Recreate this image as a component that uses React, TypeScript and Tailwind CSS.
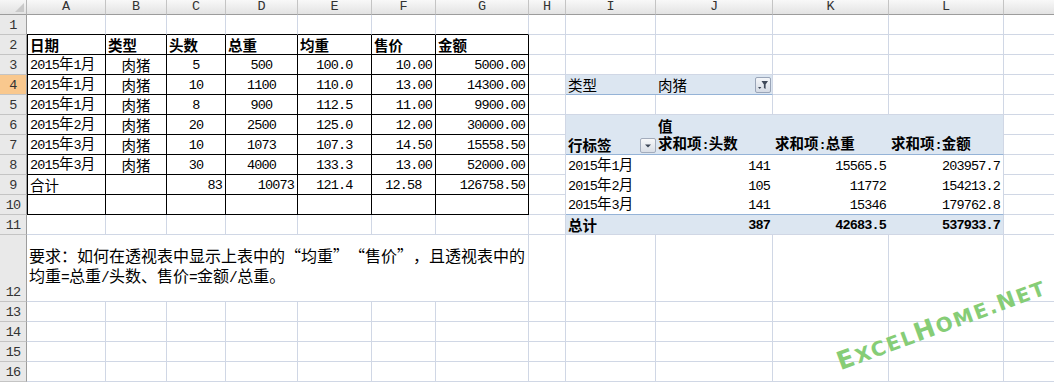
import React from "react";

type Al = "l" | "c" | "r";
type C = { t?: string; a?: Al; b?: boolean; node?: React.ReactNode };

const SPLIT = /[\x00-\x7f]+|[“”]|[^\x00-\x7f“”]+/g;

function T({ s, big }: { s: string; big?: boolean }) {
  const parts = s.match(SPLIT) || [];
  return (
    <span className="whitespace-nowrap">
      {parts.map((p, i) => {
        if (/^[\x00-\x7f]/.test(p))
          return (
            <span
              key={i}
              className={
                big
                  ? "font-['Liberation_Mono',monospace] text-[14.5px] tracking-[-0.7px] whitespace-pre"
                  : "font-['Liberation_Mono',monospace] text-[13.5px] tracking-[-0.85px] whitespace-pre"
              }
            >
              {p}
            </span>
          );
        if (p === "“")
          return (
            <span key={i} className="inline-block w-[16px] text-right font-['Noto_Sans_CJK_SC',sans-serif] text-[16px]">
              {p}
            </span>
          );
        if (p === "”")
          return (
            <span key={i} className="inline-block w-[16px] text-left font-['Noto_Sans_CJK_SC',sans-serif] text-[16px]">
              {p}
            </span>
          );
        return (
          <span
            key={i}
            className={
              big
                ? "font-['Noto_Sans_CJK_SC',sans-serif] text-[16px]"
                : "font-['Noto_Sans_CJK_SC',sans-serif] text-[14.5px]"
            }
          >
            {p}
          </span>
        );
      })}
    </span>
  );
}

function FilterBtn() {
  return (
    <div className="ml-auto mr-[1px] mb-[1px] w-[16px] h-[16px] rounded-[2px] border border-[#9aa5b8] bg-linear-to-b from-[#f4f6f9] to-[#d5dbe5] flex items-center justify-center">
      <svg width="12" height="12" viewBox="0 0 12 12">
        <path d="M4.5 2 L11 2 L8.6 5.4 L8.6 10 L6.9 9 L6.9 5.4 Z" fill="#404a5a" />
        <path d="M1 8 L4.4 8 L2.7 10 Z" fill="#404a5a" />
      </svg>
    </div>
  );
}

function DropBtn() {
  return (
    <div className="ml-auto mb-[1px] w-[16px] h-[15px] rounded-[2px] border border-[#a3acbc] bg-linear-to-b from-[#f7f8fa] to-[#d9dee6] flex items-center justify-center">
      <svg width="8" height="6" viewBox="0 0 8 6">
        <path d="M1 1.5 L7 1.5 L4 4.5 Z" fill="#3c4656" />
      </svg>
    </div>
  );
}

const L = (t: string, b = false): C => ({ t, a: "l", b });
const Ce = (t: string, b = false): C => ({ t, a: "c", b });
const R = (t: string, b = false): C => ({ t, a: "r", b });

const data: Record<number, Record<number, C>> = {
  2: { 0: L("日期", true), 1: L("类型", true), 2: L("头数", true), 3: L("总重", true), 4: L("均重", true), 5: L("售价", true), 6: L("金额", true) },
  3: { 0: L("2015年1月"), 1: Ce("肉猪"), 2: Ce("5"), 3: Ce("500"), 4: Ce("100.0"), 5: R("10.00"), 6: R("5000.00") },
  4: {
    0: L("2015年1月"), 1: Ce("肉猪"), 2: Ce("10"), 3: Ce("1100"), 4: Ce("110.0"), 5: R("13.00"), 6: R("14300.00"),
    8: L("类型"),
    9: { t: "肉猪", a: "l", node: <FilterBtn /> },
  },
  5: { 0: L("2015年1月"), 1: Ce("肉猪"), 2: Ce("8"), 3: Ce("900"), 4: Ce("112.5"), 5: R("11.00"), 6: R("9900.00") },
  6: {
    0: L("2015年2月"), 1: Ce("肉猪"), 2: Ce("20"), 3: Ce("2500"), 4: Ce("125.0"), 5: R("12.00"), 6: R("30000.00"),
    9: L("值", true),
  },
  7: {
    0: L("2015年3月"), 1: Ce("肉猪"), 2: Ce("10"), 3: Ce("1073"), 4: Ce("107.3"), 5: R("14.50"), 6: R("15558.50"),
    8: { t: "行标签", a: "l", b: true, node: <DropBtn /> },
    9: L("求和项:头数", true), 10: L("求和项:总重", true), 11: L("求和项:金额", true),
  },
  8: {
    0: L("2015年3月"), 1: Ce("肉猪"), 2: Ce("30"), 3: Ce("4000"), 4: Ce("133.3"), 5: R("13.00"), 6: R("52000.00"),
    8: L("2015年1月"), 9: R("141"), 10: R("15565.5"), 11: R("203957.7"),
  },
  9: {
    0: L("合计"), 2: R("83"), 3: R("10073"), 4: Ce("121.4"), 5: Ce("12.58"), 6: R("126758.50"),
    8: L("2015年2月"), 9: R("105"), 10: R("11772"), 11: R("154213.2"),
  },
  10: { 8: L("2015年3月"), 9: R("141"), 10: R("15346"), 11: R("179762.8") },
  11: { 8: L("总计", true), 9: R("387", true), 10: R("42683.5", true), 11: R("537933.7", true) },
};

function borderCls(r: number, c: number): string {
  if (r >= 2 && r <= 10 && c <= 6)
    return c === 0 ? "border-l border-r border-b border-black" : "border-r border-b border-black";
  if (r === 1 && c <= 6) return "border-r border-r-[#d0d7e5] border-b border-b-black";
  if (r === 4 && c === 8) return "border-b border-b-[#95b3d7] bg-[#dce6f1]";
  if (r === 4 && c === 9) return "border-r border-r-[#d0d7e5] border-b border-b-[#95b3d7] bg-[#dce6f1]";
  if (c >= 8 && c <= 11 && r >= 6 && r <= 11) {
    const last = c === 11;
    if (r === 6) return last ? "bg-[#dce6f1] border-r border-r-[#d0d7e5]" : "bg-[#dce6f1]";
    if (r === 7)
      return last
        ? "bg-[#dce6f1] border-b border-b-[#95b3d7] border-r border-r-[#d0d7e5]"
        : "bg-[#dce6f1] border-b border-b-[#95b3d7]";
    if (r === 8 || r === 9) return last ? "border-r border-r-[#d0d7e5]" : "";
    if (r === 10)
      return last ? "border-b border-b-[#95b3d7] border-r border-r-[#d0d7e5]" : "border-b border-b-[#95b3d7]";
    return last
      ? "bg-[#dce6f1] border-b border-b-[#d0d7e5] border-r border-r-[#d0d7e5]"
      : "bg-[#dce6f1] border-b border-b-[#d0d7e5]";
  }
  return "border-r border-b border-[#d0d7e5]";
}

const alignCls: Record<Al, string> = {
  l: "justify-start pl-[2px]",
  c: "justify-center",
  r: "justify-end pr-[3px]",
};

const LETTERS = ["A", "B", "C", "D", "E", "F", "G", "H", "I", "J", "K", "L", ""];

function Cell({ r, c }: { r: number; c: number }) {
  const d = data[r]?.[c];
  const a: Al = d?.a ?? "l";
  return (
    <div
      className={`flex items-end whitespace-nowrap leading-[17px] text-black ${alignCls[a]} ${d?.b ? "font-bold" : "font-normal"} ${borderCls(r, c)}`}
    >
      {d?.t ? <T s={d.t} /> : null}
      {d?.node}
    </div>
  );
}

export default function App() {
  const rows = Array.from({ length: 16 }, (_, i) => i + 1);
  const cols = Array.from({ length: 13 }, (_, i) => i);
  return (
    <div className="relative w-[1054px] h-[382px] overflow-hidden bg-white">
      <div className="grid grid-cols-[27px_79px_61px_59px_72px_74px_64px_93px_37px_90px_117px_116px_115px_60px] grid-rows-[15px_repeat(11,20px)_67px_repeat(4,20px)]">
        <div className="relative bg-linear-to-b from-[#f6f6f6] to-[#e2e2e2] border-r border-b border-r-[#b5b5b5] border-b-[#9c9c9c]">
          <svg className="absolute right-[2px] bottom-[2px]" width="9" height="9" viewBox="0 0 9 9">
            <path d="M9 0 L9 9 L0 9 Z" fill="#c9c9c9" />
          </svg>
        </div>
        {cols.map((c) => (
          <div
            key={`h${c}`}
            className="flex items-center justify-center leading-[14px] text-[#333] bg-linear-to-b from-[#f8f8f8] to-[#e3e3e3] border-r border-b border-r-[#c4c4c4] border-b-[#9c9c9c]"
          >
            <span className="font-['Liberation_Mono',monospace] text-[13.5px]">{LETTERS[c]}</span>
          </div>
        ))}
        {rows.map((r) => (
          <React.Fragment key={r}>
            <div
              className={`flex items-end justify-center leading-[17px] text-[#333] border-r border-b border-r-[#9c9c9c] border-b-[#c4c4c4] ${r === 4 ? "bg-[#f9c88e]" : "bg-[#e9e9e9]"}`}
            >
              <span className="font-['Liberation_Mono',monospace] text-[13.5px] tracking-[-0.85px]">{r}</span>
            </div>
            {r === 12 ? (
              <>
                <div className="col-span-7 flex flex-col pt-[10px] pl-[2px] leading-[20px] text-black border-r border-b border-[#d0d7e5]">
                  <div className="h-[20px] whitespace-nowrap">
                    <T big s="要求：如何在透视表中显示上表中的“均重”“售价”，且透视表中的" />
                  </div>
                  <div className="h-[20px] whitespace-nowrap">
                    <T big s="均重=总重/头数、售价=金额/总重。" />
                  </div>
                </div>
                {cols.slice(7).map((c) => (
                  <Cell key={c} r={r} c={c} />
                ))}
              </>
            ) : (
              cols.map((c) => <Cell key={c} r={r} c={c} />)
            )}
          </React.Fragment>
        ))}
      </div>
      <div className="absolute left-[842px] top-[349px] origin-bottom-left rotate-[-20.3deg] whitespace-nowrap leading-none font-['DejaVu_Sans',sans-serif] font-bold tracking-[1.8px] text-[#86cd76]">
        <span className="text-[25px]">E</span>
        <span className="text-[20px]">XCEL</span>
        <span className="text-[25px]">H</span>
        <span className="text-[20px]">OME.</span>
        <span className="text-[22px]">N</span>
        <span className="text-[20px]">ET</span>
      </div>
    </div>
  );
}
